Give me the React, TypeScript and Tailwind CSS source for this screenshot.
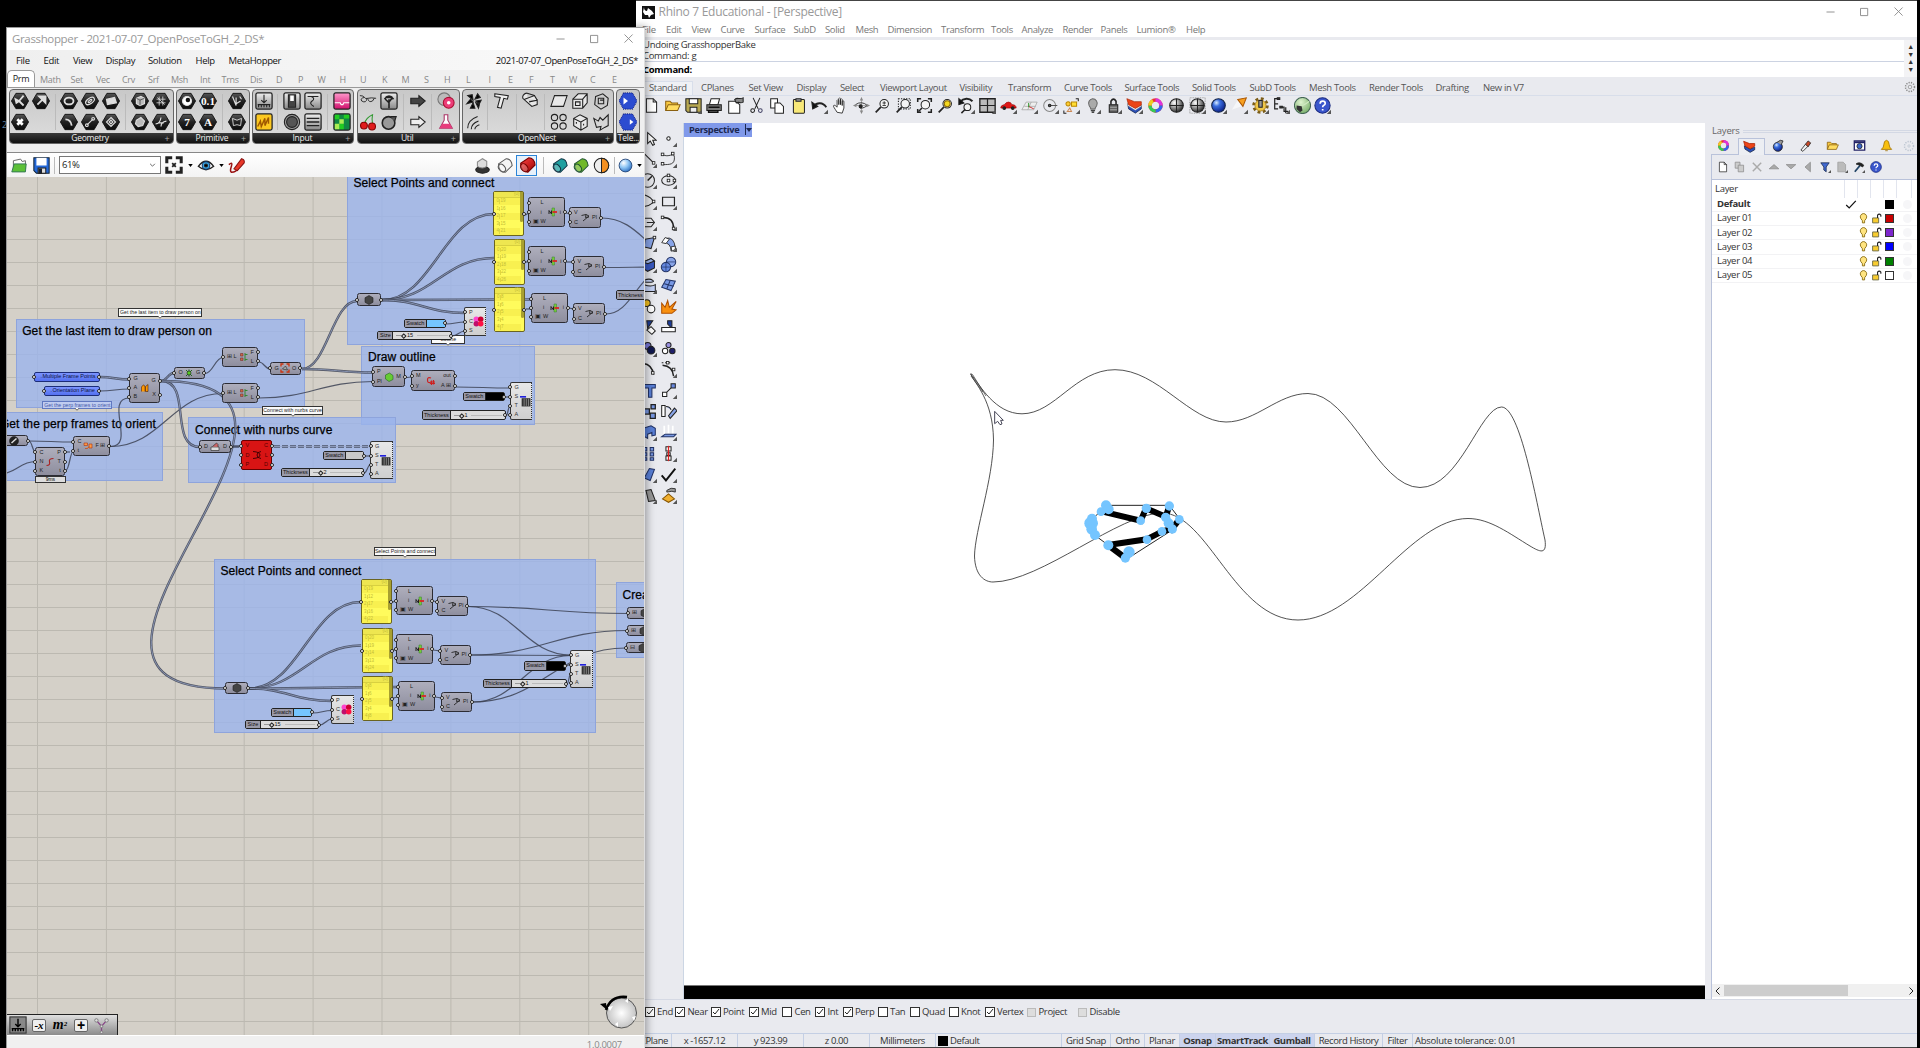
import React from "react";

type Slot = [string, string];
const UI = "font-['Open_Sans','Noto_Sans',sans-serif]";

/* ---------- shared bits ---------- */

function Slots({ items, className }: { items: Slot[]; className: string }) {
  return (
    <div className={"flex items-center whitespace-nowrap " + className}>
      {items.map(([t, w], i) => (
        <span key={i} className={"shrink-0 " + w}>{t}</span>
      ))}
    </div>
  );
}

function Ico({ children, className = "h-5 w-5" }: { children: React.ReactNode; className?: string }) {
  return (
    <svg viewBox="0 0 20 20" className={"shrink-0 " + className} fill="none" stroke="#222" strokeWidth="1.2">
      {children}
    </svg>
  );
}

const corner = <path d="M20 15v5h-5z" fill="#555" stroke="none" />;

function Defs() {
  return (
    <svg className="absolute h-0 w-0">
      <defs>
        <radialGradient id="ballBlue" cx=".35" cy=".3" r=".75"><stop offset="0" stopColor="#d8ecff" /><stop offset=".35" stopColor="#3a6ee0" /><stop offset="1" stopColor="#0a1c80" /></radialGradient>
        <radialGradient id="ballSky" cx=".35" cy=".3" r=".75"><stop offset="0" stopColor="#fff" /><stop offset=".5" stopColor="#8cc4f4" /><stop offset="1" stopColor="#2d6fc0" /></radialGradient>
        <radialGradient id="ballGrey" cx=".35" cy=".3" r=".75"><stop offset="0" stopColor="#fff" /><stop offset=".4" stopColor="#aaa" /><stop offset="1" stopColor="#222" /></radialGradient>
        <radialGradient id="ballGreen" cx=".4" cy=".3" r=".8"><stop offset="0" stopColor="#e0f4d0" /><stop offset="1" stopColor="#6fa860" /></radialGradient>
        <linearGradient id="hexDark" x1="0" y1="0" x2="0" y2="1"><stop offset="0" stopColor="#555" /><stop offset=".5" stopColor="#222" /><stop offset="1" stopColor="#0c0c0c" /></linearGradient>
        <linearGradient id="btn" x1="0" y1="0" x2="0" y2="1"><stop offset="0" stopColor="#eee" /><stop offset="1" stopColor="#888" /></linearGradient>
        <linearGradient id="pink" x1="0" y1="0" x2="0" y2="1"><stop offset="0" stopColor="#f9c" /><stop offset="1" stopColor="#d0106c" /></linearGradient>
        <linearGradient id="cyl" x1="0" y1="0" x2="1" y2="1"><stop offset="0" stopColor="#f44" /><stop offset="1" stopColor="#900" /></linearGradient>
        <radialGradient id="dial"><stop offset="0" stopColor="#fff" /><stop offset="1" stopColor="#c4c4c4" /></radialGradient>
      </defs>
    </svg>
  );
}

/* ---------- Rhino ---------- */

const rhinoMenu: Slot[] = [
  ["File", "w-[24px]"], ["Edit", "w-[25.5px]"], ["View", "w-[29px]"], ["Curve", "w-[34px]"], ["Surface", "w-[39px]"],
  ["SubD", "w-[31.5px]"], ["Solid", "w-[30.5px]"], ["Mesh", "w-[32px]"], ["Dimension", "w-[53.5px]"], ["Transform", "w-[50px]"],
  ["Tools", "w-[30.5px]"], ["Analyze", "w-[41px]"], ["Render", "w-[38px]"], ["Panels", "w-[36px]"], ["Lumion®", "w-[49.5px]"], ["Help", "w-[30px]"],
];

const rhinoTabs: Slot[] = [
  ["CPlanes", "w-[47.5px]"], ["Set View", "w-[48px]"], ["Display", "w-[43.5px]"], ["Select", "w-[40px]"],
  ["Viewport Layout", "w-[79.5px]"], ["Visibility", "w-[48.5px]"], ["Transform", "w-[56px]"], ["Curve Tools", "w-[60.5px]"], ["Surface Tools", "w-[67.5px]"],
  ["Solid Tools", "w-[57.5px]"], ["SubD Tools", "w-[59.5px]"], ["Mesh Tools", "w-[60px]"], ["Render Tools", "w-[66.5px]"], ["Drafting", "w-[47.5px]"], ["New in V7", "w-[50px]"],
];

const lens = <><circle cx="12" cy="8" r="5" fill="#f4f4f4" /><path d="M8 12l-6 6" strokeWidth="2" /></>;
const page = <path d="M4 2h8l4 4v12H4z" fill="#fff" />;

const rhinoTools: React.ReactNode[] = [
  <>{page}<path d="M12 2v4h4" /></>,
  <><path d="M2 16V5h5l2 2h7v3" fill="#f8c840" stroke="#8a6010" /><path d="M2 16l3-7h14l-3 7z" fill="#ffdc60" stroke="#8a6010" /></>,
  <><path d="M1 2h18v16H3l-2-2z" fill="#b8a850" /><path d="M5 2h10v6H5z" fill="#fff" /><path d="M6 12h8v6H6z" fill="#eee" />{corner}</>,
  <><path d="M6 2h10l-2 7H4z" fill="#fff" /><path d="M1 9h17v7H1z" fill="#777" /><path d="M3 12h13M3 16h11v2H3z" fill="#fff" stroke="#111" strokeWidth="1.6" /></>,
  <><path d="M2 5h8l5 4v10H2z" fill="#fff" /><path d="M9 3c3-3 5 0 10-2v5c-4 2-5-1-8 1z" fill="#888" /></>,
  <><path d="M6 1l6 13M14 1L8 14" /><circle cx="5.500" cy="16" r="2.200" /><circle cx="14.500" cy="16" r="2.200" stroke="#446" /></>,
  <><path d="M2 2h8v11H2z" fill="#fff" /><path d="M7 7h6l4 4v8H7z" fill="#fff" /></>,
  <><rect x="4" y="3" width="13" height="16" rx="1" fill="#f8e878" /><path d="M7 2h6v3H7z" fill="#999" /></>,
  <><path d="M3 11c4-5 11-5 15 1" strokeWidth="2.200" /><path d="M1 6l1 8 6-3z" fill="#111" />{corner}</>,
  <path d="M6 18C3 13 1 11 2 10s3 1 4 2V4q1-2 2 0v5-7q1-2 2 0v7-6q1-2 2 0v7-5q1-1 2 0v8l-2 6z" fill="#fff" strokeWidth="1" />,
  <><path d="M10 1v18M1 10h18" stroke="#999" strokeWidth="1" /><path d="M3 9q7-5 14 1-7 5-10 2" strokeWidth="1" /><path d="M10 0l2 4H8zM10 20l2-4H8zM0 10l4-2v4zM20 10l-4-2v4z" fill="#888" stroke="none" /><circle cx="9" cy="11" r="1.800" fill="#222" /></>,
  <>{lens}<path d="M10 7h4M12 5v4M10 10h4" strokeWidth="1" /></>,
  <><path d="M4 2h14v12H4z" strokeDasharray="1.5 1.500" />{lens}</>,
  <><path d="M2 6V2h4M14 2h4v4M18 14v4h-4M2 14v4h4" strokeWidth="1.800" /><circle cx="11" cy="9" r="5" fill="#f4f4f4" /><path d="M7 13l-4 4" strokeWidth="1.800" /></>,
  <>{lens}<circle cx="12" cy="8" r="3.500" fill="#f4d820" stroke="#860" /></>,
  <><path d="M2 6c5-5 11-5 15-1" strokeWidth="2.400" /><path d="M1 2v7l6-2z" fill="#111" /><circle cx="11" cy="12" r="4" fill="#f4f4f4" /><path d="M8 15l-4 4" strokeWidth="1.800" />{corner}</>,
  <><path d="M1 2h18v16H1z" fill="#bbb" strokeWidth="1.600" /><path d="M10 2v16M1 10h18" strokeWidth="1.400" />{corner}</>,
  <><path d="M1 12q0-2 4-3 2-3 5-3t4 3q5 0 5 4H1z" fill="#e01818" stroke="#900" strokeWidth=".8" /><circle cx="5" cy="13" r="1.600" fill="#222" /><circle cx="15" cy="13" r="1.600" fill="#222" />{corner}</>,
  <><path d="M1 15L6 6h13l-4 9zM4 11h13M8 15l4-9" stroke="#999" fill="#eee" strokeWidth=".8" /><path d="M9 11l6 3" stroke="#c33" /><path d="M9 12V7" stroke="#393" />{corner}</>,
  <><circle cx="9" cy="10" r="7" stroke="#888" /><path d="M9 10h9" stroke="#555" /><circle cx="9" cy="10" r="1.500" fill="#555" />{corner}</>,
  <><circle cx="6" cy="8" r="2.500" fill="#fc3" stroke="#b80" /><path d="M10 6h6v5h-6z" fill="#fd3" stroke="#b80" /><path d="M5 17l3-4 2 4z" stroke="#c85" /><path d="M15 2h3v3M1 16v3h3" />{corner}</>,
  <><path d="M10 2a5.500 5.500 0 015 8q-2 3-2 4H8q0-1-2-4a5.500 5.500 0 014-8z" fill="#aaa" stroke="#666" /><path d="M8 16h5M9 18h3" stroke="#444" strokeWidth="1.800" />{corner}</>,
  <><path d="M7 9V5q3-5 6 0v4" strokeWidth="1.800" /><path d="M5 9h10v9H5z" fill="#666" /><path d="M6 12h8M6 15h8" stroke="#aaa" />{corner}</>,
  <><path d="M2 8l9 6 7-4v4l-7 5-8-5z" fill="#2c50b8" stroke="#124" strokeWidth=".8" /><path d="M2 7l9 6 7-4v2l-7 4.500L2 10z" fill="#fff" stroke="#888" strokeWidth=".5" /><path d="M1 2l9 3.500 8 0v4l-7 4L3 9z" fill="#ec4418" stroke="#a20" strokeWidth=".8" />{corner}</>,
  <><circle cx="10" cy="10" r="6.500" stroke="#e33" strokeWidth="4" /><path d="M10 3.500a6.500 6.500 0 016.500 6.500" stroke="#d3d" strokeWidth="4" /><path d="M16.500 10a6.500 6.500 0 01-6.500 6.500" stroke="#36e" strokeWidth="4" /><path d="M10 16.500A6.500 6.500 0 013.500 10" stroke="#3c5" strokeWidth="4" /><path d="M3.500 10A6.500 6.500 0 017 4.300" stroke="#ec2" strokeWidth="4" /></>,
  <><circle cx="10" cy="10" r="8" fill="url(#ballGrey)" /><path d="M10 2v16M2 10h16" stroke="#222" /></>,
  <><path d="M1 1h18v18H1z" stroke="#999" strokeDasharray="1 1" /><circle cx="10" cy="10" r="8" fill="url(#ballGrey)" /><path d="M10 2v16M2 10h16" />{corner}</>,
  <><circle cx="10" cy="10" r="8" fill="url(#ballBlue)" stroke="#124" />{corner}</>,
  <><path d="M1 15L9 2l6 8z" fill="#fff" stroke="none" opacity=".6" /><path d="M8 3l10-2-4 10z" fill="#f8a020" stroke="#a50" />{corner}</>,
  <><circle cx="10" cy="10" r="8" stroke="#7a5c18" strokeWidth="3.400" strokeDasharray="3.300 3" /><circle cx="10" cy="10" r="6.500" fill="#f0c848" stroke="#a88020" strokeWidth="1" /><path d="M8 4h4v8H8z" fill="#999" />{corner}</>,
  <><path d="M6 2H2v12h4M2 8h4M9 12h4v5h5M15 12v7" strokeWidth="1.400" /><path d="M5 1h3v2H5zM8 11h3v2H8z" fill="#333" />{corner}</>,
  <><circle cx="10" cy="10" r="9.500" fill="url(#ballGreen)" stroke="#465" /><path d="M3 11q8 0 15-6" stroke="#cfe8c0" /><path d="M3 10l6 1 1 5-3 2-4-4z" fill="#333" stroke="none" /></>,
  <><circle cx="10" cy="10" r="9" fill="#3a56cc" stroke="#1c2c80" /><path d="M7.200 7.800q0-3 3-3t3 2.700q0 1.500-2 2.500-1 .6-1 2M10.200 14v2" stroke="#fff" strokeWidth="2" />{corner}</>,
];

const sq = (x: number, y: number) => <rect x={x - 1.500} y={y - 1.500} width="3" height="3" fill="#fff" strokeWidth="1" />;
const sideTools: [React.ReactNode, React.ReactNode][] = [
  [<path d="M9 3v13l3-3 3 5 2-1-2-5h4z" fill="#fff" />, <><circle cx="10" cy="10" r="2" fill="#fff" />{corner}</>],
  [<><path d="M5 3l11 11" />{sq(16, 14)}{corner}</>, <><path d="M3 4c7 5 14-4 14 4s-5 8-14 8" strokeWidth="1" />{sq(3, 4)}{sq(15, 3)}{sq(3, 15)}{corner}</>],
  [<><circle cx="9" cy="10" r="8" /><path d="M9 10l5-5" strokeWidth="1.800" />{corner}</>, <><ellipse cx="10" cy="10" rx="8" ry="5.500" />{sq(10, 4)}{sq(10, 10)}{sq(17, 10)}{corner}</>],
  [<><path d="M5 2q9 3 11 9-5 4-11 5" />{sq(16, 10)}{corner}</>, <><path d="M3 5h14v10H3z" strokeWidth="1.400" />{corner}</>],
  [<><path d="M5 5h8l4 5-4 5H5M8 10h8" />{corner}</>, <><path d="M4 4q12 0 12 13" strokeWidth="1.800" />{sq(3, 4)}{sq(16, 17)}{corner}</>],
  [<><path d="M6 5l11-2-4 13-8-2z" fill="#88a4e8" />{sq(17, 3)}{corner}</>, <><path d="M6 4q11-3 12 12l-5 3Q13 9 4 9z" fill="#88a4e8" strokeWidth="1" /><path d="M6 3l5 2-4 5-5-1z" fill="#fff" strokeWidth="1" /><path d="M13 14l5-1v4l-4 2z" fill="#fff" strokeWidth="1" />{corner}</>],
  [<><path d="M4 7l9-4 4 3v8l-8 4-5-3z" fill="#3858c0" /><path d="M4 7l9-4 4 3-8 3z" fill="#a0b8f0" />{corner}</>, <><circle cx="13" cy="7" r="5.500" fill="#88a4e8" stroke="#236" /><circle cx="7" cy="13" r="5.500" fill="#6488e0" stroke="#236" /><path d="M2 13h10M7 8v10M8 7h10" stroke="#236" strokeWidth=".8" />{corner}</>],
  [<><path d="M5 4q6-3 10 0t-10 2M5 9q8 3 13 0v8H5z" fill="#c4d2f6" />{corner}</>, <><path d="M2 12L7 3l11 2-5 11z" fill="#7898e4" stroke="#236" /><path d="M5 8l11 3M12 4L8 14" stroke="#236" />{corner}</>],
  [<><circle cx="8" cy="6" r="4" fill="#f4c020" /><circle cx="13" cy="13" r="4.500" fill="#fff" /></>, <path d="M2 18L2 6l4 5 3-8 2 8 8-7-5 9 5 1-5 4z" fill="#f89010" stroke="#b05000" />],
  [<><path d="M8 2h7L9 11z" fill="#1c3c98" /><path d="M8 13l5-4 5 5-4 4z" fill="#fff" /></>, <><path d="M2 10h16v5H2z" fill="#fff" /><path d="M9 2h5v8h-1l-4-4z" fill="#1c3c98" /></>],
  [<><circle cx="9" cy="7" r="4" fill="#7878d8" /><circle cx="13" cy="12" r="4.500" fill="#101850" />{corner}</>, <><circle cx="10" cy="6" r="3" fill="#9890e0" /><circle cx="6" cy="13" r="3.200" fill="#fff" /><circle cx="14.500" cy="13" r="3.200" fill="#20206c" /></>],
  [<><path d="M4 3q10 1 12 13" strokeWidth="1.800" />{sq(15, 14)}</>, <><path d="M3 5q12 1 13 13" strokeWidth="1.800" /><path d="M2 2h12" strokeDasharray="2 2" />{sq(9, 2)}{sq(16, 10)}{corner}</>],
  [<path d="M4 3h14v4h-4v11h-4V7H4z" fill="#5a80d8" stroke="#236" />, <><path d="M13 2h5v5h-5z" fill="#6888e0" /><path d="M3 12h5v5H3zM8 12l5-5" fill="#fff" />{corner}</>],
  [<><path d="M13 2h5v5h-5zM5 7h6v6H5zM12 12h6v6h-6z" fill="#7898e4" strokeWidth="1.500" /></>, <><path d="M2 3h4v13H2z" fill="#fff" /><path d="M7 4q5 0 6 4M10 15l7-9 3 3-8 9z" fill="#88a4e8" /></>],
  [<><path d="M4 5l9-3 5 3v8l-4 1v-4l-5 2v5l-5-3z" fill="#5a80d8" stroke="#236" />{corner}</>, <><path d="M5 2v10M10 1v10M15 2v10" stroke="#fff" strokeWidth="2" /><path d="M2 15l4-3h13l-3 3z" fill="#7898e4" stroke="#236" />{corner}</>],
  [<><path d="M4 3h4v4H4zM12 3h4v4h-4zM4 9h4v4H4zM12 9h4v4h-4zM4 15h4v3H4zM12 15h4v3h-4z" fill="#7898e4" stroke="#236" /></>, <><path d="M7 2h6v5H7zM8 9h4v3H8zM7 13h6v5H7z" fill="#fff" /><path d="M10 1v18" stroke="#e02020" strokeWidth="1.500" />{corner}</>],
  [<><path d="M5 14L11 3l6 1-5 13z" fill="#5a80d8" stroke="#236" />{corner}</>, <><path d="M2 11l5 6L18 3" stroke="#111" strokeWidth="2.200" />{corner}</>],
  [<><path d="M7 4l6-1 5 13-8 1z" fill="#999" />{corner}</>, <><path d="M3 14l7-6 7 6-7 4z" fill="#f0b030" stroke="#850" /><path d="M8 4q5-4 10-2v4l-4-1-6 1z" fill="#999" strokeWidth="1" />{corner}</>],
];

const osnaps: [string, boolean, string][] = [
  ["End", true, "w-[30.500px]"], ["Near", true, "w-[35.500px]"], ["Point", true, "w-[38px]"], ["Mid", true, "w-[33.500px]"], ["Cen", false, "w-[33px]"],
  ["Int", true, "w-[27.500px]"], ["Perp", true, "w-[35px]"], ["Tan", false, "w-[32px]"], ["Quad", false, "w-[39px]"], ["Knot", false, "w-[36px]"], ["Vertex", true, "w-[42px]"],
];

function Osnap() {
  return (
    <div className="flex h-[34px] shrink-0 items-center border-t border-[#d5d9e4] pb-[9px] pl-[8.500px] text-[9.500px] tracking-[-0.35px] text-[#333]">
      {osnaps.map(([t, on, w]) => (
        <div key={t} className={"flex shrink-0 items-center gap-[2.500px] " + w}>
          <span className="flex h-[10px] w-[10px] items-center justify-center border border-[#333] bg-white">
            {on && <svg viewBox="0 0 8 8" className="h-2 w-2"><path d="M1 4l2 2 4-5" fill="none" stroke="#222" /></svg>}
          </span>
          {t}
        </div>
      ))}
      {["Project", "Disable"].map((t) => (
        <div key={t} className="flex w-[51px] shrink-0 items-center gap-[3px]">
          <span className="h-[9px] w-[9px] border border-[#bbb] bg-[#ddd]" />
          {t}
        </div>
      ))}
    </div>
  );
}

const statusCells: [string, string][] = [
  ["CPlane", "w-[36px] justify-end pr-[3px]"], ["x -1657.12", "w-[66px] justify-center"], ["y 923.99", "w-[66px] justify-center"], ["z 0.00", "w-[66px] justify-center"],
  ["Millimeters", "w-[66px] justify-center"], ["■", "w-[126px] pl-[2px]"], ["Grid Snap", "w-[49px] justify-center"], ["Ortho", "w-[34px] justify-center"],
  ["Planar", "w-[35px] justify-center"], ["Osnap", "w-[36px] justify-center bg-[#ccd4ee] font-bold"], ["SmartTrack", "w-[54px] justify-center bg-[#ccd4ee] font-bold"],
  ["Gumball", "w-[45px] justify-center bg-[#ccd4ee] font-bold"], ["Record History", "w-[68px] justify-center"], ["Filter", "w-[30px] justify-center"],
];

function Viewport() {
  return (
    <div className="relative flex min-w-0 flex-1 flex-col bg-white">
      <div className="flex h-[13.500px] w-[68px] items-center bg-[#8099ea] pl-[5px] text-[9.250px] font-bold tracking-[-0.3px] text-[#1c2850]">
        <span className="flex-1">Perspective</span>
        <span className="flex h-[11px] w-[7.500px] items-center justify-center border-l border-[#1c2850]">
          <svg viewBox="0 0 6 4" className="h-1 w-1.5"><path d="M0 0h6L3 4z" fill="#1c2850" /></svg>
        </span>
      </div>
      <svg viewBox="684 123 1021 861" className="absolute left-0 top-0 h-[861px] w-[1021px]" fill="none">
        <path
          d="M970.7 374C980 385 995 413.800 1022 413.800C1055 413.800 1075 369.700 1115 369.700C1158 369.700 1190 422 1226 422C1256 422 1278 393.500 1308 393.500C1350 393.500 1378 487.500 1420 487.500C1460 487.500 1480 407 1501.500 407C1520 407 1536 500 1545 540C1547 555 1540 552 1530 546C1510 534 1490 518.500 1468 518.500C1410 518.500 1360 620 1298 620C1235 620 1208 513 1162 513C1120 513 1040 582 993 582C985 582 975 576 974.500 556C975 530 993 480 993.500 440C993 400 975 384 970.700 374Z"
          stroke="#333" strokeWidth=".85"
        />
        <path d="M970.500 373.500L972.500 374.500L986 396M971 376L983 392" stroke="#333" strokeWidth=".7" />
        <g transform="translate(930 350) scale(.33333)">
          <path d="M528 466H718L750 508M534 585L480 545M586 630L727 540M528 466L495 500" stroke="#222" strokeWidth="3" />
          <path d="M515 484L632 512L648 475L707 500L718 468M707 500L727 535L748 508M534 585L650 568L695 545L727 535M534 585L586 624" stroke="#000" strokeWidth="18" />
          <g fill="#75c5ff">
            {[[528, 466, 15], [536, 478, 15], [513, 485, 13], [482, 520, 19], [486, 506, 15], [487, 520, 17], [485, 538, 16], [495, 555, 15], [632, 512, 13], [649, 475, 14], [718, 468, 14], [707, 502, 14], [716, 520, 15], [727, 537, 14], [748, 508, 13], [696, 544, 13], [651, 569, 13], [535, 586, 15], [597, 606, 17], [586, 624, 14]].map(([x, y, r], i) => (
              <circle key={i} cx={x} cy={y} r={r} />
            ))}
          </g>
          <path d="M194 184v37l9-7 7 10 6-2-4-11h8z" fill="#fff" stroke="#445" strokeWidth="3" />
        </g>
      </svg>
    </div>
  );
}

const layers: [string, string][] = [
  ["Layer 01", "bg-[#c80000]"], ["Layer 02", "bg-[#7d26cd]"], ["Layer 03", "bg-[#0000ff]"], ["Layer 04", "bg-[#008000]"], ["Layer 05", "bg-white"],
];

const panelTabs: React.ReactNode[] = [
  rhinoTools[24],
  <><path d="M2 9l9 5 7-3v4l-7 4-8-5z" fill="#2c50b8" stroke="#124" /><path d="M1 2l9 3.500 8 0v4l-7 4L3 9z" fill="#ec4418" stroke="#a20" /></>,
  <><circle cx="9" cy="12" r="7" fill="url(#ballBlue)" /><path d="M8 5q5-5 9-2l-3 6" fill="#999" /></>,
  <><path d="M3 17l7-9 4 3-8 8z" fill="#eee" /><path d="M10 8l4-5 4 3-4 6z" fill="#c84828" /></>,
  rhinoTools[1],
  <><path d="M2 3h16v14H2z" fill="#fff" stroke="#226" strokeWidth="2" /><path d="M2 5h16" stroke="#226" strokeWidth="3" /><circle cx="10" cy="11" r="4" fill="#3a66cc" /></>,
  <path d="M2 16q4-3 4-8t4-6q4 1 4 6t4 8zM8 18h4" fill="#f8c010" stroke="#a07000" />,
];

const layerTools: React.ReactNode[] = [
  <>{page}<path d="M12 2v4h4" /></>,
  <g stroke="#888"><path d="M2 2h8v10H2z" fill="#ccc" /><path d="M7 7h9v11H7z" fill="#ccc" /></g>,
  <path d="M3 3l14 14M17 3L3 17" stroke="#aaa" strokeWidth="2.400" />,
  <path d="M2 13l8-7 8 7z" fill="#aaa" stroke="#888" />,
  <path d="M2 6l8 7 8-7z" fill="#aaa" stroke="#888" />,
  <path d="M14 2v16L5 10z" fill="#aaa" stroke="#888" />,
  <><path d="M3 3h14l-5 7v8l-4-3v-5z" fill="#4068d0" stroke="#124" />{corner}</>,
  <><path d="M3 2h9l4 4v12H3z" fill="#bbb" stroke="#999" />{corner}</>,
  <><path d="M3 18L12 7" strokeWidth="3" stroke="#246" /><path d="M5 5q6-5 13 2l-2 3-5-3z" fill="#222" />{corner}</>,
  <><circle cx="10" cy="10" r="9" fill="#3a56cc" stroke="#1c2c80" /><path d="M7 7.800q0-3 3-3t3 2.700q0 1.500-2 2.500-1 .6-1 2M10 14v2" stroke="#fff" strokeWidth="2" /></>,
];

function LayersPanel() {
  return (
    <aside className="ml-[6px] flex w-[206px] shrink-0 flex-col">
      <div className="mt-[3px] flex h-[11px] items-center gap-[3px] pl-px text-[9.500px] tracking-[-0.2px] text-[#666]">
        Layers<span className="h-[3px] flex-1 border-y border-[#d3d8e4]" />
      </div>
      <div className="flex h-[18px] items-end">
        {panelTabs.map((g, i) => (
          <div
            key={i}
            className={
              "flex h-[17.500px] w-[27px] shrink-0 items-center justify-center " +
              (i === 0 ? "pr-[3px] " : "") +
              (i === 1 ? "border border-b-0 border-[#b9c2da] bg-[#eceef3] pr-[4px]" : "border-b border-[#b9c2da]")
            }
          >
            <Ico className="h-[13px] w-[13px]">{g}</Ico>
          </div>
        ))}
        <div className="flex h-[17.500px] flex-1 items-center justify-center border-b border-[#b9c2da]">
          <Ico className="h-3 w-3"><circle cx="10" cy="10" r="7.500" stroke="#bbc4d0" strokeWidth="2.500" strokeDasharray="2 2" /><circle cx="10" cy="10" r="2" stroke="#bbc4d0" /></Ico>
        </div>
      </div>
      <div className="flex h-[25px] shrink-0 items-center gap-[5px] border-b border-l border-[#b9c2da] pl-[5px]">
        {layerTools.map((g, i) => <Ico key={i} className="h-3 w-3">{g}</Ico>)}
      </div>
      <div className="flex min-h-0 flex-1 flex-col border-l border-[#b9c2da] bg-white text-[9.500px] tracking-[-0.3px] text-[#333]">
        <div className="flex h-[18px] shrink-0 items-center pl-[3px]">
          <span className="w-[129px]">Layer</span>
          {[0, 1, 2, 3, 4].map((i) => <span key={i} className="h-full w-[13px] border-l border-[#e2e5ee]" />)}
          <span className="h-full w-[3px] border-r border-[#e2e5ee]" />
        </div>
        <div className="flex h-[14px] shrink-0 items-center border-b border-[#f2f2f4] pl-[5px] font-bold">
          <span className="w-[128px]">Default</span>
          <span className="w-[12px]"><Ico className="h-[12px] w-[12px]"><path d="M2 10l5 5L18 3" stroke="#111" strokeWidth="2" /></Ico></span>
          <span className="w-[28px]" />
          <span className="h-[9px] w-[9px] border border-black bg-black" />
          <span className="ml-[9px] h-[9px] w-[9px] rounded-full bg-[#f6f6f8]" />
        </div>
        {layers.map(([n, c]) => (
          <div key={n} className="flex h-[14.200px] shrink-0 items-center border-b border-[#f2f2f4] pl-[5px]">
            <span className="w-[141px]">{n}</span>
            <Ico className="h-[11px] w-[11px]"><path d="M10 1a6 6 0 015 9l-3 4v4H8v-4l-3-4a6 6 0 015-9z" fill="#ffe480" stroke="#866a10" strokeWidth="1.600" /></Ico>
            <Ico className="ml-[2px] h-[11px] w-[12px]"><path d="M2 9h11v9H2z" fill="#f8cc30" stroke="#664" strokeWidth="1.600" /><path d="M11 9V4q3-4 6 0v3" strokeWidth="2" /></Ico>
            <span className={"ml-[2px] h-[9px] w-[9px] border border-[#333] " + c} />
            <span className="ml-[9px] h-[9px] w-[9px] rounded-full bg-[#f6f6f8]" />
          </div>
        ))}
        <div className="flex-1" />
        <div className="flex h-[13px] shrink-0 items-center bg-[#f0f0f0] text-[#555]">
          <Ico className="mx-px h-[10px] w-[10px]"><path d="M13 3l-7 7 7 7" strokeWidth="2" /></Ico>
          <span className="h-[11px] w-[124px] bg-[#cdcdcd]" />
          <span className="flex-1" />
          <Ico className="mx-px h-[10px] w-[10px]"><path d="M7 3l7 7-7 7" strokeWidth="2" /></Ico>
        </div>
        <div className="h-[2px] shrink-0" />
      </div>
    </aside>
  );
}

function WinButtons({ className }: { className: string }) {
  return (
    <div className={"flex items-center " + className}>
      {["M5 10h9", "M5 6h8v8H5z", "M5 5l9 9M14 5l-9 9"].map((d) => (
        <span key={d} className="flex w-[34px] justify-center"><Ico className="h-[18px] w-[18px]"><path d={d} stroke="#888" strokeWidth="1" /></Ico></span>
      ))}
    </div>
  );
}

function RhinoWindow() {
  return (
    <div className={"absolute left-[636px] top-0 flex h-[1048px] w-[1281px] flex-col overflow-hidden border-t border-[#444] bg-[#e9eaef] " + UI}>
      <div className="flex h-[22px] shrink-0 items-center bg-white pl-[6px] text-[12px] tracking-[-0.28px] text-[#999]">
        <svg viewBox="0 0 13 13" className="mr-[3.500px] h-[13px] w-[13px]"><rect width="13" height="13" fill="#111" /><path d="M2 1q0 4 3 4l1-3 4 3 2 3-3 1-2 3-1-3-3 0-2-3z" fill="#fff" /></svg>
        <span className="flex-1">Rhino 7 Educational - [Perspective]</span>
        <WinButtons className="mr-px" />
      </div>
      <Slots items={rhinoMenu} className="h-[14px] shrink-0 bg-white pl-[6px] pt-px text-[9.500px] tracking-[-0.35px] text-[#777]" />
      <div className="mt-[3px] flex h-[37px] shrink-0 bg-white text-[9.500px] leading-[11px] tracking-[-0.3px] text-[#333]">
        <div className="flex flex-1 flex-col">
          <div className="h-[21.500px] border-b border-[#ccd3e2] pl-[7px] leading-[10.500px]">
            <div>Undoing GrasshopperBake</div>
            <div>Command: g</div>
          </div>
          <div className="pl-[7px] pt-[2px] font-bold text-black">Command:</div>
        </div>
        <div className="flex w-[13px] flex-col items-center justify-between bg-[#f3f3f5] py-1 text-[7px] leading-[6px]"><span>▲</span><span>▼</span><span>▲</span><span>▼</span></div>
      </div>
      <div className="mt-[2px] flex h-[17px] shrink-0 items-center border-b border-[#d8deea] text-[9.500px] tracking-[-0.35px] text-[#555]">
        <span className="flex h-[14px] w-[57px] items-center self-end border-r border-t border-[#d8deea] bg-[#eff1f5] pl-[13px]">Standard</span>
        <Slots items={rhinoTabs} className="flex-1 pl-[8px] pt-[3px]" />
        <Ico className="mr-[1px] h-3 w-3"><circle cx="10" cy="10" r="7.500" stroke="#888" strokeWidth="2.500" strokeDasharray="2 2" /><circle cx="10" cy="10" r="3" stroke="#888" /></Ico>
      </div>
      <div className="flex h-[27px] shrink-0 items-start pl-[5.500px] pt-[1px]">
        {rhinoTools.map((g, i) => (
          <span key={i} className="flex w-[20.970px] shrink-0 justify-center"><Ico className="h-[17px] w-[17px]">{g}</Ico></span>
        ))}
      </div>
      <div className="flex min-h-0 flex-1">
        <div className="flex w-[48px] shrink-0 flex-col border-r border-[#ccd6e4] pt-[5px]">
          {sideTools.map(([a, b], i) => (
            <div key={i} className="flex h-[21px] shrink-0 items-center gap-[3px] pl-[4px]">
              <Ico className="h-[17px] w-[17px]">{a}</Ico>
              <Ico className="h-[17px] w-[17px]">{b}</Ico>
            </div>
          ))}
        </div>
        <div className="flex min-w-0 flex-1 flex-col">
          <Viewport />
          <div className="h-[14px] shrink-0 border-t border-[#777] bg-black" />
        </div>
        <LayersPanel />
      </div>
      <Osnap />
      <div className="flex h-[15px] shrink-0 items-stretch border-b border-t border-b-[#444] border-t-[#c4cfe4] text-[9.500px] tracking-[-0.4px] text-[#333]">
        {statusCells.map(([t, c]) => (
          <div key={t} className={"flex shrink-0 items-center whitespace-nowrap border-r border-[#c4cfe4] leading-none " + c}>
            {t === "■" ? <><span className="mr-[2px] h-[10px] w-[10px] bg-black" />Default</> : t}
          </div>
        ))}
        <span className="whitespace-nowrap pl-[2px] leading-[13px] tracking-[-0.25px]">Absolute tolerance: 0.01</span>
      </div>
    </div>
  );
}

/* ---------- Grasshopper ribbon ---------- */

const hex = (g: React.ReactNode) => (
  <><path d="M5.500 1.500h9L19.500 10l-5 8.500h-9L.5 10z" fill="url(#hexDark)" stroke="#111" strokeWidth="1" /><g stroke="#ddd" strokeWidth="1.300">{g}</g></>
);
const box = (g: React.ReactNode, fill = "url(#btn)") => (
  <><rect x="1" y="1" width="18" height="18" rx="2" fill={fill} stroke="#222" strokeWidth="1.400" />{g}</>
);
const glyph = (t: string) => (
  <text x="10" y="14.500" textAnchor="middle" fontSize="12.500" fontWeight="bold" fontFamily="Liberation Serif, serif" fill="#fff" stroke="none">{t}</text>
);

type Col = [React.ReactNode, React.ReactNode | null];
type Panel = { name: string; w: string; groups: Col[][]; more?: boolean };

const ribbon: Panel[] = [
  {
    name: "Geometry", w: "w-[165px]", more: true, groups: [
      [[hex(<path d="M9 10L5 8l1 4zM9 10l5-6M9 10l5 5" strokeWidth="2" fill="#aaa" />), hex(<path d="M7 7l6 6M13 7l-6 6" strokeWidth="3" stroke="#fff" />)], [hex(<path d="M6 14l7-7M8 5h7v7z" strokeWidth="2" fill="#ddd" />), null]],
      [[hex(<ellipse cx="10" cy="10" rx="5" ry="3.800" strokeWidth="2" />), hex(<path d="M6 7q6 0 7 7" strokeWidth="2" />)], [hex(<><ellipse cx="10" cy="10" rx="5.500" ry="3" transform="rotate(-35 10 10)" /><ellipse cx="10" cy="10" rx="2.500" ry="1" transform="rotate(-35 10 10)" /></>), hex(<><path d="M7 13l6-6" /><circle cx="6.500" cy="13.500" r="1.500" /><circle cx="13.500" cy="6.500" r="1.500" /></>)], [hex(<path d="M5 8l9-2 2 6-10 2z" fill="#ddd" />), hex(<path d="M10 5l5 5-5 5-5-5zM10 8l2 2-2 2-2-2z" />)]],
      [[hex(<><path d="M6 7l5-2 4 2v6l-5 2-4-2z" fill="#bbb" /><path d="M6 7l4 2 5-2M10 9v6" stroke="#333" strokeWidth=".8" /></>), hex(<path d="M6 8l5-3 4 4-2 5-5 1-3-3z" fill="#bbb" />)], [hex(<path d="M5 8h10M5 12h10M8 5v10M12 5v10M6 6l8 8" strokeWidth=".9" />), hex(<path d="M4 12q5 0 6-7M10 15q0-5 6-6M7 11l6 0" />)]],
    ],
  },
  {
    name: "Primitive", w: "w-[74px]", more: true, groups: [
      [[hex(<><circle cx="10" cy="10" r="5" fill="#fff" /><circle cx="11" cy="9" r="2.500" fill="#111" stroke="none" /></>), hex(glyph("7"))], [hex(glyph("0.1")), hex(glyph("A"))]],
      [[hex(<path d="M5 5l4 10M9 15V6M9 13l5-3M13 5l2 3" />), hex(<path d="M5 6l5 2 5-2-1 8-4-1-4 1z" strokeWidth="1" />)]],
    ],
  },
  {
    name: "Input", w: "w-[102px]", more: true, groups: [
      [[box(<path d="M10 3v9M7 9l3 3 3-3M3 14h14M4 14v3M7 14v3M10 14v3M13 14v3M16 14v3" />), box(<path d="M3 15l3-6 1 6 4-9 0 8 4-9v7" stroke="#a05800" strokeWidth="1.600" />, "#fcc820")]],
      [[box(<><path d="M6 3h8v14H6z" fill="#444" /><path d="M8 4h4v6H8z" fill="#fff" stroke="none" /></>), <><circle cx="10" cy="10" r="8.500" fill="#999" /><circle cx="10" cy="10" r="6" fill="#555" /></>], [box(<path d="M4 5h12M8 5q5 2 1 5t2 6" />), box(<path d="M3 6h14M3 10h14M3 14h14" strokeWidth="1.600" />)]],
      [[box(<path d="M2 12h6l1 2h2l1-2h6" stroke="#fff" />, "url(#pink)"), box(<><path d="M2 2h5v5H2zM12 2h6v4h-6zM7 12h5v6H7z" fill="#2c2" stroke="none" /><path d="M7 7h5v5H7zM2 12h5v6H2z" fill="#ae5" stroke="none" /></>, "#184")]],
    ],
  },
  {
    name: "Util", w: "w-[103px]", more: true, groups: [
      [[<path d="M1 4q4 0 5 2t4 1 9 0M6 6q-5 1-3 4 5 3 6-3M10 8q1 4 5 2l2-3" strokeWidth="1" />, <><path d="M6 12Q8 5 15 2q-1 5 0 10" stroke="#393" /><circle cx="5.500" cy="14" r="3.800" fill="#e01c1c" stroke="#800" /><circle cx="14.500" cy="15" r="3.800" fill="#e01c1c" stroke="#800" /></>], [box(<path d="M10 18V8M10 12l-4-4M10 11l4-5M5 8q5-7 10 0M6 6h8" strokeWidth="1.800" />), <><circle cx="9.500" cy="11" r="7" fill="#999" strokeWidth="1.800" /><path d="M12 4h6l-2 6" fill="#555" /></>]],
      [[<path d="M2 7h9V4l7 6-7 6v-3H2z" fill="#444" />, <path d="M2 7h9V4l7 6-7 6v-3H2z" fill="#eee" />]],
      [[<><circle cx="8" cy="8" r="7" fill="#bbb" stroke="#777" /><circle cx="13" cy="12" r="6" fill="#ec3c78" stroke="#a13" /><circle cx="13" cy="12" r="2" fill="#fff" stroke="none" /></>, <><path d="M8 2h4v6l5 9H3l5-9z" fill="#fff" stroke="#a36" /><path d="M6 12h8l3 5H3z" fill="#e83c7c" stroke="none" /></>]],
    ],
  },
  {
    name: "OpenNest", w: "w-[152px]", more: true, groups: [
      [[<path d="M9 9L3 4l5-1zM11 8l3-6 3 4zM9 11l-7 2 4-5zM12 10l6-1-2 4zM9 12l-3 6h5zM12 12l3 6 1-4z" fill="#000" />, <path d="M3 17Q3 8 14 4M7 18q0-6 8-9M11 18q0-3 5-5" />]],
      [[<path d="M2 2l15 2-1 4-4-1-3 11-4-1 3-11-6-1z" fill="#eee" />, null]],
      [[<path d="M6 1q-5 2-4 6l10 9 6-2 0-5-9 2M4 8l11-4 3 5M6 1l9 3" fill="#e8e8e8" />, null]],
      [[<path d="M5 4h14l-4 12H1z" fill="#e8e8e8" />, <><circle cx="5" cy="5" r="3.500" /><circle cx="14.500" cy="5" r="3.500" /><circle cx="5" cy="14.500" r="3.500" /><circle cx="14.500" cy="14.500" r="3.500" /></>], [<path d="M2 8l6-6h10v10l-5 6H2zM2 8h11v10M13 8l5-6M5 11h5v4H5z" fill="#e8e8e8" />, <path d="M3 6l7-4 8 4v9l-7 4-8-5zM3 6l8 4v9M11 10l7-4M6 10v2M14 12v2" fill="#e8e8e8" />], [<path d="M4 5l8-3 6 5-1 8-7 4-7-5zM7 7h6v6H7zM9 9h4" />, <path d="M2 6l5 3 2-4 3 3 6-6v12l-4 2-5 3 1-4-5 1z" />]],
    ],
  },
  {
    name: "Tele...", w: "w-[24px]", groups: [
      [[<><path d="M5 1h10l5 9-5 9H5L0 10z" fill="#2c4cd0" stroke="#128" strokeDasharray="1 1" /><path d="M5 6l5 4-5 4z" fill="#fff" stroke="none" /></>, <><path d="M5 1h10l5 9-5 9H5L0 10z" fill="#2c4cd0" stroke="#128" strokeDasharray="1 1" /><path d="M12 7l4 3-4 3z" fill="#fff" stroke="none" /></>]],
    ],
  },
];

function Ribbon() {
  return (
    <div className="flex h-[66px] shrink-0 items-start gap-[2.400px] border-b border-t border-b-[#888] border-t-[#999] bg-[#efefef] pl-[1.500px] pt-[1px]">
      {ribbon.map((p) => (
        <div key={p.name} className={"flex h-[55px] shrink-0 flex-col overflow-hidden rounded-[4px] border border-[#666] bg-gradient-to-b from-[#c8c8c8] to-[#dedede] " + p.w}>
          <div className="flex flex-1 items-center">
            {p.groups.map((g, gi) => (
              <React.Fragment key={gi}>
                {gi > 0 && <span className="mx-[3.200px] h-9 w-px bg-[#bbb]" />}
                {g.map((c, ci) => (
                  <div key={ci} className="flex w-[21px] flex-col items-center gap-[3px]">
                    <Ico className="h-[18px] w-[18px]">{c[0]}</Ico>
                    <Ico className="h-[18px] w-[18px]">{c[1]}</Ico>
                  </div>
                ))}
              </React.Fragment>
            ))}
          </div>
          <div className="flex h-[10px] shrink-0 items-center bg-gradient-to-b from-[#3a3a3a] to-[#111] text-[8.500px] leading-none tracking-[-0.25px] text-[#eee]">
            <span className={"flex-1 text-center " + (p.more ? "pl-[6px]" : "")}>{p.name}</span>
            {p.more && <span className="w-[8px] text-[9px] text-[#aaa]">+</span>}
          </div>
        </div>
      ))}
    </div>
  );
}

const ghMenu: Slot[] = [["File", "w-[27.500px]"], ["Edit", "w-[29.500px]"], ["View", "w-[32.500px]"], ["Display", "w-[42.500px]"], ["Solution", "w-[47.500px]"], ["Help", "w-[33px]"], ["MetaHopper", "w-[60px]"]];
const ghTabs: Slot[] = [
  ["Math", "w-[30.500px]"], ["Set", "w-[25.500px]"], ["Vec", "w-[26px]"], ["Crv", "w-[26px]"], ["Srf", "w-[23px]"], ["Msh", "w-[29px]"], ["Int", "w-[21.500px]"], ["Trns", "w-[28.500px]"], ["Dis", "w-[26px]"],
  ["D", "w-[22px]"], ["P", "w-[19.500px]"], ["W", "w-[22px]"], ["H", "w-[20.500px]"], ["U", "w-[22px]"], ["K", "w-[19.500px]"], ["M", "w-[22.500px]"], ["S", "w-[20px]"], ["H", "w-[22px]"], ["L", "w-[22.500px]"], ["I", "w-[19.500px]"],
  ["E", "w-[21px]"], ["F", "w-[21px]"], ["T", "w-[19px]"], ["W", "w-[21px]"], ["C", "w-[22px]"], ["E", "w-[20px]"],
];

const cylinder = (fill: string, line: string) => <><path d="M3 8l9-6q6 0 7 8l-8 8q-8 0-8-10z" fill={fill} stroke={line} /><ellipse cx="7" cy="13" rx="3.500" ry="5" transform="rotate(-40 7 13)" fill="#fff" fillOpacity=".25" stroke={line} /></>;
const Caret = () => <svg viewBox="0 0 6 4" className="h-[3px] w-[5px]"><path d="M0 0h6L3 4z" /></svg>;

function CanvasToolbar() {
  return (
    <div className="flex h-[24px] shrink-0 items-center bg-gradient-to-b from-white to-[#f3f3f3] pl-[4px]">
      <Ico className="h-[17px] w-[16px]"><path d="M3 17V4l9-2 2 3 4-1v10z" fill="#fff" stroke="#666" /><path d="M1 18L4 8h15l-1 10z" fill="#5cc038" stroke="#375" /></Ico>
      <Ico className="ml-[6px] h-[17px] w-[17px]"><path d="M1 1h18v18H4l-3-3z" fill="#2468d8" stroke="#123" /><path d="M4 1h12v9H4z" fill="#fff" stroke="none" /><path d="M6 13h9v6H6z" fill="#ddd" /><path d="M7 14h3v5H7z" fill="#124" /></Ico>
      <span className="mx-[4px] h-[17px] w-px bg-[#bbb]" />
      <div className="flex h-[17.500px] w-[102px] items-center justify-between border border-[#777] bg-white px-[2px] text-[9.500px] tracking-[-0.4px] text-[#222]">
        61%<svg viewBox="0 0 8 5" className="mr-[2px] h-[4px] w-[7px]"><path d="M1 1l3 3 3-3" fill="none" stroke="#444" /></svg>
      </div>
      <Ico className="ml-[4px] h-[18px] w-[18px]"><path d="M2 8V2h6M12 2h6v6M18 12v6h-6M8 18H2v-6" strokeWidth="3.400" stroke="#222" /><path d="M8 8l4 4M12 8l-4 4" strokeWidth="2" /></Ico>
      <span className="mx-[4.500px]"><Caret /></span>
      <Ico className="h-[17px] w-[18px]"><path d="M1 11q9-12 18 0-9 8-18 0z" fill="#fff" strokeWidth="1.600" /><circle cx="10" cy="10" r="4.500" fill="#3aa4e0" stroke="#136" /><circle cx="10" cy="10" r="1.800" fill="#000" /></Ico>
      <span className="mx-[4px]"><Caret /></span>
      <Ico className="h-[17px] w-[17px]"><path d="M1 9q5-4 3 2t0 7q6 0 8-5" stroke="#911" strokeWidth="1.800" /><path d="M7 14L16 2q4 1 3 5l-8 9z" fill="#e83828" stroke="#811" /></Ico>
      <span className="flex-1" />
      <Ico className="h-[17px] w-[17px]"><ellipse cx="10" cy="15" rx="8" ry="4" fill="#333" /><path d="M4 11V6l6-4 5 3v6q-5 4-11 0z" fill="#ddd" stroke="#888" /></Ico>
      <Ico className="ml-[5px] h-[17px] w-[17px]">{cylinder("#f4f4f4", "#555")}</Ico>
      <span className="ml-[3px] mr-[6px] flex h-[21px] w-[21px] items-center justify-center border border-[#2a84d8] bg-[#e6f0fa]"><Ico className="h-[18px] w-[18px]">{cylinder("url(#cyl)", "#700")}</Ico></span>
      <span className="mr-[7px] h-[17px] w-px bg-[#bbb]" />
      <Ico className="mr-[4px] h-[17px] w-[17px]">{cylinder("#20a0a0", "#134")}</Ico>
      <Ico className="mr-[4px] h-[17px] w-[17px]">{cylinder("#70b828", "#253")}</Ico>
      <Ico className="h-[17px] w-[17px]"><circle cx="10" cy="10" r="8.500" fill="#eee" /><path d="M10 1.500a8.500 8.500 0 010 17z" fill="#f49020" /><path d="M10 1.500v17" /></Ico>
      <span className="mx-[3.500px] h-[17px] w-px bg-[#bbb]" />
      <Ico className="h-[17px] w-[15px]"><circle cx="10" cy="10" r="8.500" fill="url(#ballSky)" stroke="#247" /></Ico>
      <span className="ml-[4px] mr-[2px]"><Caret /></span>
    </div>
  );
}

/* ---------- Grasshopper canvas ---------- */

const OX = 7.6;
const OY = 177.6;
const at = (x: number, y: number, w: number, h: number): React.CSSProperties => ({ left: x - OX, top: y - OY, width: w, height: h });

const groups: [number, number, number, number, string, number][] = [
  [347.500, 170, 300, 175.500, "Select Points and connect", 6.5],
  [362, 346.500, 174, 79, "Draw outline", 4.5],
  [16.300, 320, 289.200, 88.500, "Get the last item to draw person on", 5],
  [-6, 412.500, 169.500, 69, "Get the perp frames to orient", 5],
  [189, 418, 208, 66, "Connect with nurbs curve", 5.5],
  [214.500, 559.500, 382, 174, "Select Points and connect", 5],
  [616.500, 583, 40, 75.500, "Create", 5.5],
];

type W = [number, number, number, number, number?, number?];
/* x1, y1, x2, y2, double line, handle length */
const wires: W[] = [
  [382, 300, 494, 214, 1], [382, 300, 494, 258, 1], [382, 300, 531, 299.500, 1], [382, 300, 465, 313, 1],
  [302, 369, 357, 301, 1], [302, 369, 373, 372.500, 1], [259, 398, 373, 381.500],
  [602, 218, 690, 262], [605, 267.500, 660, 267], [606, 314, 665, 270],
  [446, 324, 465, 322], [452, 336, 465, 331], [406, 377.500, 412, 377], [456, 387, 510, 388], [505, 397, 510, 397], [506, 416, 510, 406],
  [525, 215, 529, 213], [566, 213, 570, 214], [525, 262, 529, 262], [566, 262, 573, 262], [526, 309, 531, 309], [569, 308, 574, 309],
  [100, 377, 129.500, 379.500, 1], [100, 391, 129.500, 389], [110.500, 446.500, 129.500, 398, 0, 26], [161, 381, 174, 373, 1], [205, 373.500, 223, 357.500],
  [259, 362, 270, 369], [110.500, 446.500, 223, 393.500], [161, 381, 200, 447, 1, 32], [161, 381, 225.500, 688.500, 1, 228],
  [364.500, 456, 371, 456], [364, 473, 371, 464], [29, 441, 73.500, 442], [29, 441, 35.500, 452], [0, 474, 35.500, 461.500], [66, 470, 73.500, 451], [66, 452, 70, 452],
  [249, 688.500, 361, 602, 1], [249, 688.500, 361, 645.500, 1], [249, 688.500, 398, 687, 1], [249, 688.500, 332, 701, 1],
  [312.500, 713, 332, 710.500], [319.500, 725, 332, 719], [468.500, 606.500, 628, 613.500], [468.500, 606.500, 571, 655], [471.500, 655, 627, 630.500],
  [471.500, 655, 571, 655.500], [473, 702, 571, 655.500], [473, 702, 626, 648], [392, 602, 397, 601], [433, 601, 438, 602], [393, 650, 397, 650], [433, 650, 441, 651],
  [393, 698, 398, 697], [435, 697, 442, 698], [566, 666, 571, 664], [567, 684, 571, 673],
];

function wirePath([x1, y1, x2, y2, , k]: W) {
  const h = k ?? Math.abs(x2 - x1) * 0.45;
  return `M${x1} ${y1}C${x1 + h} ${y1} ${x2 - h} ${y2} ${x2} ${y2}`;
}

const g = {
  hex: <path d="M10 1l8 4.500v9L10 19l-8-4.500v-9z" fill="#444" />,
  item: <><path d="M8 2h5v16H8z" fill="#7c3" stroke="#484" /><path d="M2 7v7M2 7l5 7V7" strokeWidth="2" /><path d="M9 10h9" stroke="#d22" strokeWidth="3.500" /></>,
  poly: <path d="M3 5l9-2-1 6 7-1M12 3l6 3-6 5-6 5" strokeWidth="1.800" />,
  mesh: <path d="M3 6l8-4 7 5v8l-8 4-7-5z" fill="#6c3" stroke="#262" />,
  cs: <path d="M10 4Q3 1 3 8t6 5M11 9v9M15 8v9M8 12h10M8 15h10" stroke="#c22" strokeWidth="2.400" />,
  flame: <path d="M3 17V8q5-8 7 0v9M11 17V7l5-4v14z" fill="#f90" stroke="#520" />,
  tree: <><path d="M4 4l12 12M16 4L4 16M10 3v14" stroke="#262" strokeWidth="2" /><circle cx="10" cy="10" r="4" fill="#5c2" /></>,
  list: <><path d="M3 3h5v5H3zM3 12h5v5H3z" fill="#c64" stroke="#733" /><path d="M12 2v16M12 5h5M12 15h5" stroke="#383" strokeWidth="2" /></>,
  orient: <><path d="M2 7V2h5M13 2h5v5M18 13v5h-5M7 18H2v-5" stroke="#c31" strokeWidth="2.600" /><path d="M5 12l6-6 4 8z" fill="#aaa" /></>,
  frame: <path d="M2 4h7v5H2zM12 6h6v8h-6zM4 15q6 2 8-4" fill="#f94" stroke="#a31" />,
  curve: <path d="M3 17q8 0 6-7t8-7" stroke="#a22" strokeWidth="2.200" />,
  net: <><path d="M2 10h16v7H2z" fill="#ddd" /><path d="M5 9l8-7 3 3v5" fill="#c66" /></>,
  nurbs: <path d="M2 3q14 1 14 7T2 17M18 3q-8 1-8 7t8 7" stroke="#300" strokeWidth="1.800" />,
  lines: <><path d="M0 0h11v3H0z" fill="#22d" stroke="none" /><path d="M3 4h16v15H3z" fill="#333" stroke="none" /><path d="M7.500 5v13M11.500 5v13M15.500 5v13" stroke="#aaa" strokeWidth="1.200" /></>,
  dots: <g stroke="none"><circle cx="6" cy="6" r="5" fill="#f4c" /><circle cx="14" cy="6" r="5" fill="#c03" /><circle cx="6" cy="14" r="5" fill="#c0106c" /><circle cx="14" cy="14" r="5" fill="#f14" /></g>,
  plane: <><circle cx="10" cy="10" r="9" fill="#222" /><path d="M5 14l10-9" stroke="#ddd" strokeWidth="3" /></>,
};

type NodeSpec = { r: [number, number, number, number]; i?: string[]; o?: string[]; icon: React.ReactNode; kind?: "red" | "light" };
const nodes: NodeSpec[] = [
  { r: [357.500, 294, 24.500, 12.500], icon: g.hex, i: [""], o: [""] },
  { r: [225.500, 683, 23.500, 11.500], icon: g.hex, i: [""], o: [""] },
  ...([[529, 198, 37, 30], [529, 247, 37.500, 30], [531.500, 293.500, 37.500, 30], [396.500, 586.500, 37, 29.500], [396.500, 635, 37, 29.500], [398.500, 681.500, 37, 30]] as [number, number, number, number][]).map((r) => ({ r, icon: g.item, i: ["\u00a0\u00a0\u00a0\u00a0\u00a0L", "\u00a0\u00a0\u00a0\u00a0\u00a0i", "▣ W"], o: ["i"] })),
  ...([[570, 208, 32, 20.500], [573.500, 257, 31.500, 21], [574, 304, 32, 21], [437.500, 596.500, 31, 20.500], [440.500, 645.500, 31, 20.500], [442, 692.500, 31, 20.500]] as [number, number, number, number][]).map((r) => ({ r, icon: g.poly, i: ["V", "C"], o: ["Pl"] })),
  { r: [373, 367, 33, 21], icon: g.mesh, i: ["P", "Pl"], o: ["M"] },
  { r: [412, 371, 44, 21], icon: g.cs, i: ["M", "y"], o: ["out", "A ⊞"] },
  { r: [129.500, 373.500, 31.500, 30], icon: g.flame, i: ["G", "A", "B"], o: ["G", "X"] },
  { r: [174.500, 367.500, 31, 12], icon: g.tree, i: ["O"], o: ["G"] },
  { r: [223, 347.500, 36, 20], icon: g.list, i: ["⊞ L"], o: ["F", "L"] },
  { r: [223, 383.500, 36, 20], icon: g.list, i: ["⊞ L"], o: ["F", "L"] },
  { r: [270.500, 362.500, 31, 13], icon: g.orient, i: ["G"], o: ["O"] },
  { r: [0, 436, 29, 10.500], icon: g.plane, i: [""], o: [""] },
  { r: [73.500, 436.500, 37, 20.500], icon: g.frame, i: ["C", "t"], o: ["F ⊞"] },
  { r: [35.500, 447.500, 30.500, 29.500], icon: g.curve, i: ["C", "N", "K"], o: ["P", "T", "t"] },
  { r: [200, 441, 32, 13], icon: g.net, i: ["D"], o: ["D"] },
  { r: [241.500, 441, 31.500, 30], icon: g.nurbs, i: ["V", "D", "P"], o: ["C", "L", "D"], kind: "red" },
  { r: [371, 441.500, 23, 38.500], icon: g.lines, i: ["G", "S", "T", "A"], kind: "light" },
  { r: [510.500, 382.500, 22.500, 38.500], icon: g.lines, i: ["G", "S", "T", "A"], kind: "light" },
  { r: [571, 650.500, 22.500, 38.500], icon: g.lines, i: ["G", "S", "T", "A"], kind: "light" },
  { r: [465, 307.500, 21.500, 29.500], icon: g.dots, i: ["P", "C", "S"], kind: "light" },
  { r: [332, 695.500, 22.500, 29.500], icon: g.dots, i: ["P", "C", "S"], kind: "light" },
  { r: [628, 608, 30, 11.500], icon: g.hex, i: ["⊞"], o: [""] },
  { r: [627.500, 625.500, 30, 11.500], icon: g.hex, i: ["⊞"], o: [""] },
  { r: [626.500, 642.500, 30, 11.500], icon: g.hex, i: ["⊟"], o: [""] },
];

function Ports({ names, side }: { names: string[]; side: "l" | "r" }) {
  return (
    <div className="flex h-full flex-col justify-around">
      {names.map((n, i) => (
        <div key={i} className={"flex items-center gap-[2px] " + (side === "l" ? "-ml-[2.500px]" : "-mr-[2.500px] flex-row-reverse")}>
          <span className="h-[4px] w-[4px] shrink-0 rounded-full border border-[#222] bg-white" />
          <span className="whitespace-nowrap leading-none">{n}</span>
        </div>
      ))}
    </div>
  );
}

function Node({ n }: { n: NodeSpec }) {
  const tone =
    n.kind === "red" ? "bg-[#d81414] border-[#600] text-[#500] rounded-[2px]"
      : n.kind === "light" ? "bg-gradient-to-b from-[#e8e8e8] to-[#cfcfcf] border-[#333] text-[#333] rounded-l-[2px] border-r-[1.500px] [border-right-style:dotted]"
        : "bg-gradient-to-b from-[#aeaebc] to-[#8e8e9e] border-[#2c2c34] text-[#222] rounded-[2.500px]";
  return (
    <div className={"absolute flex items-center justify-between border " + tone} style={at(...n.r)}>
      <Ports names={n.i ?? []} side="l" />
      <Ico className={n.kind === "light" ? "h-[11px] w-[11px]" : "h-[10px] w-[10px]"}>{n.icon}</Ico>
      {n.o ? <Ports names={n.o} side="r" /> : <span />}
    </div>
  );
}

const panels: [number, number, string[]][] = [
  [494, 191.500, ["19", "16", "17", "15", "21"]], [494.500, 240, ["20", "19", "18", "22", "26"]], [494.500, 287.500, ["8", "6", "5", "4", "7"]],
  [361.500, 579.500, ["19", "12", "17", "16", "22"]], [362.500, 628.500, ["20", "19", "14", "13", "24"]], [362.500, 676.500, ["8", "6", "5", "4", "8"]],
];

function Port({ right = false }: { right?: boolean }) {
  return <span className={"absolute top-1/2 h-[4px] w-[4px] -translate-y-1/2 rounded-full border border-[#222] bg-white " + (right ? "-right-[2.500px]" : "-left-[2.500px]")} />;
}

function YellowPanel({ p: [x, y, rows] }: { p: [number, number, string[]] }) {
  return (
    <div className="absolute rounded-[2px] border border-[#6a6420] bg-[#fffb5c] text-[4.500px] leading-none text-[#c4bc38]" style={at(x, y, 31, 45.500)}>
      <div className="flex h-full">
        <div className="flex flex-1 flex-col">
          <div className="h-[6px] border-b border-[#d8d040] bg-[#eee650] pr-px text-right">{"{0}"}</div>
          {rows.map((r, i) => (
            <div key={i} className={"flex flex-1 items-center pl-[2px] " + (i % 2 ? "bg-[#fffb5c]" : "bg-[#f8f050]")}>
              <span className="w-[4px] border-r border-[#e0d840]">{i}</span>{r}
            </div>
          ))}
        </div>
        <div className="h-[30px] w-[3px] rounded-b bg-[#a8a030]" />
      </div>
      <Port /><Port right />
    </div>
  );
}

type Ctl = { r: [number, number, number, number]; label: string; lw: string; color?: string; v?: string };
const controls: Ctl[] = [
  { r: [404.500, 319.500, 42, 9], label: "Swatch", lw: "w-[22px]", color: "bg-[#75c5ff]" },
  { r: [463.500, 393, 42, 9], label: "Swatch", lw: "w-[22px]", color: "bg-black" },
  { r: [323.500, 452, 41.500, 9], label: "Swatch", lw: "w-[22px]", color: "bg-[#c8c8c8]" },
  { r: [271.500, 708.500, 41.500, 9], label: "Swatch", lw: "w-[22px]", color: "bg-[#75c5ff]" },
  { r: [524.500, 662, 42, 9.500], label: "Swatch", lw: "w-[22px]", color: "bg-black" },
  { r: [378, 331.500, 74.500, 9.500], label: "Size", lw: "w-[15px]", v: "15" },
  { r: [245.500, 720.500, 74.500, 9.500], label: "Size", lw: "w-[15px]", v: "15" },
  { r: [422.500, 411, 84, 10], label: "Thickness", lw: "w-[28px]", v: "1" },
  { r: [281.500, 468.500, 83, 9.500], label: "Thickness", lw: "w-[28px]", v: "2" },
  { r: [483.500, 679.500, 84, 9.500], label: "Thickness", lw: "w-[28px]", v: "1" },
  { r: [616.500, 291, 84, 10], label: "Thickness", lw: "w-[28px]", v: "1" },
];

function Control({ c }: { c: Ctl }) {
  return (
    <div className="absolute flex overflow-visible rounded-[2px] border border-[#222] bg-[#dcdcdc] text-[5.500px] leading-none text-[#111]" style={at(...c.r)}>
      <span className={"flex shrink-0 items-center justify-center border-r border-[#222] bg-[#9a9aa8] " + c.lw}>{c.label}</span>
      {c.color ? <span className={"flex-1 " + c.color} /> : (
        <span className="flex flex-1 items-center gap-px pl-[3px]">
          <span className="h-px w-[5px] bg-[#999]" />
          <span className="h-[3.500px] w-[3.500px] rotate-45 border border-[#222]" />
          {c.v}
          <span className="mx-[3px] h-px flex-1 bg-[#bbb]" />
        </span>
      )}
      <Port right />
    </div>
  );
}

const tags: [number, number, number, string, boolean][] = [
  [119, 309, 84, "Get the last item to draw person on", false], [43, 401.500, 70, "Get the perp frames to orient", true],
  [262.500, 407, 61.500, "Connect with nurbs curve", false], [374.500, 548, 62, "Select Points and connect", false], [432, 336, 34, "outline", false],
];

const capsules: [number, number, number, string][] = [[34.500, 372.500, 66, "Multiple Frame Points"], [44.500, 386.500, 56, "Orientation Plane"]];

function Canvas() {
  return (
    <div className="relative h-[858px] shrink-0 overflow-hidden bg-[#d4d0c8] font-['Liberation_Sans',sans-serif]">
      <svg viewBox="7 177 638 858" className="absolute left-0 top-0 h-[858px] w-[638px]" stroke="#bcb9b1" strokeWidth="1">
        {Array.from({ length: 10 }, (_, i) => <path key={i} d={`M${37.500 + i * 68.900} 177v858`} />)}
        {Array.from({ length: 38 }, (_, i) => <path key={i} d={`M7 ${193.500 + i * 23}h638`} />)}
      </svg>
      {groups.map(([x, y, w, h, t, pt], i) => (
        <div key={i} className="absolute border border-[#8ea4dc] bg-[#9bb4ec]/80 pl-[5.500px] text-[12px] leading-[13px] tracking-[0.09px] text-black [-webkit-text-stroke:0.25px_black]" style={{ ...at(x, y, w, h), paddingTop: pt }}>
          <span className="whitespace-nowrap">{t}</span>
        </div>
      ))}
      {tags.map(([x, y, w, t, blue], i) => (
        <div key={i} className={"absolute flex items-center justify-center whitespace-nowrap border text-[5.200px] leading-none " + (blue ? "border-[#6078c0] bg-[#c0ccf0] text-[#4058a8]" : "border-[#333] bg-[#fafafa] text-[#222]")} style={at(x, y, w, 8.500)}>
          {t}
          <svg viewBox="0 0 6 4" className="absolute -bottom-[3px] left-1/2 h-[3px] w-[5px] -translate-x-1/2"><path d="M0 0l3 3 3-3" fill="#fff" stroke="#333" /></svg>
        </div>
      ))}
      <svg viewBox="7 177 638 858" className="absolute left-0 top-0 h-[858px] w-[638px]" fill="none">
        {wires.map((w, i) => (
          <g key={i}>
            <path d={wirePath(w)} stroke="#3c4254" strokeWidth={w[4] ? 2.400 : 1.200} opacity=".85" />
            {w[4] ? <path d={wirePath(w)} stroke="#8c98b8" strokeWidth=".9" /> : null}
          </g>
        ))}
        <path d="M233 446.500h8M274 446.500h97" stroke="#3c4254" strokeWidth="2.400" strokeDasharray="6 2" opacity=".85" />
        <path d="M274 446.500h97" stroke="#9aa8cc" strokeWidth=".8" />
      </svg>
      <div className="text-[5.500px]">
        {nodes.map((n, i) => <Node key={i} n={n} />)}
      </div>
      {panels.map((p, i) => <YellowPanel key={i} p={p} />)}
      {controls.map((c, i) => <Control key={i} c={c} />)}
      {capsules.map(([x, y, w, t]) => (
        <div key={t} className="absolute flex items-center justify-between whitespace-nowrap rounded-[2px] border border-[#1c2c78] bg-gradient-to-b from-[#7c94ff] to-[#5470f0] px-[3px] text-[5.500px] leading-none text-[#0c1440]" style={at(x, y, w, 10)}>
          <span className="text-[4.500px]">→</span><span className="pr-px">{t}</span><Port /><Port right />
        </div>
      ))}
      <div className="absolute flex items-center justify-center border border-[#333] bg-[#ddd] text-[5px] leading-none" style={at(35.500, 477, 31, 6.500)}>9ms</div>

      <div className="absolute bottom-0 left-0 flex h-[21px] w-[111px] items-center gap-[3px] border border-b-0 border-l-0 border-[#222] bg-gradient-to-b from-[#e0e0e0] to-[#8c8c8c] pl-[2px]">
        <Ico className="h-[18px] w-[18px]"><rect x="1" y="1" width="18" height="18" fill="#888" stroke="#333" /><path d="M10 3v9M7 9l3 3 3-3M3 14h14M4 14v3M7 14v3M10 14v3M13 14v3M16 14v3" stroke="#000" strokeWidth="1.600" /></Ico>
        <span className="mx-[2px] flex h-[13px] w-[14px] items-center justify-center rounded-[2px] border border-[#666] bg-[#eee] font-['Liberation_Serif',serif] text-[11px] font-bold italic leading-none">-x</span>
        <span className="w-[18px] text-center font-['Liberation_Serif',serif] text-[14px] font-bold italic leading-none">m<sup className="text-[7px]">2</sup></span>
        <span className="mx-[2px] flex h-[13px] w-[14px] items-center justify-center rounded-[2px] border border-[#666] bg-[#eee] text-[14px] font-bold leading-none">+</span>
        <Ico className="h-[17px] w-[17px]"><path d="M10 19v-8L4 4M10 11l6-7" stroke="#848" strokeWidth="1.500" /><g fill="#ddd" stroke="#777" strokeWidth="1"><circle cx="4" cy="4" r="2" /><circle cx="16" cy="4" r="2" /><circle cx="10" cy="11" r="1.500" /><circle cx="10" cy="18" r="1.500" /></g></Ico>
      </div>
      <svg viewBox="0 0 40 36" className="absolute h-[36px] w-[40px]" style={{ left: 592, top: 818 }}>
        <circle cx="22.500" cy="18" r="15" fill="url(#dial)" stroke="#555" />
        <path d="M7 15Q12 0 28 2" fill="none" stroke="#000" strokeWidth="2.600" />
        <path d="M1 9l6-1 1 7z" fill="#000" />
        <path d="M26 6l3-3v5zM9 12l5-1-3 5zM33 22l4-1-2 5zM16 29l3-2v5z" fill="#fff" />
      </svg>
    </div>
  );
}

function GrasshopperWindow() {
  return (
    <div className={"absolute left-[6px] top-[27px] flex h-[1021px] w-[639px] flex-col overflow-hidden border-l border-r border-t border-[#999] border-r-[#ddd] bg-[#f0f0f0] shadow-[2px_0_8px_rgba(0,0,0,0.35)] " + UI}>
      <div className="flex h-[22px] shrink-0 items-center bg-white pl-[5px] text-[11.500px] tracking-[-0.35px] text-[#999]">
        <span className="flex-1 whitespace-nowrap">Grasshopper - 2021-07-07_OpenPoseToGH_2_DS*</span>
        <WinButtons className="mb-[1px] mr-[-2px]" />
      </div>
      <div className="flex h-[20px] shrink-0 items-center bg-gradient-to-r from-[#efefef] to-[#fafafa] pl-[9px] pr-[6px] pt-[2px] text-[9.500px] tracking-[-0.35px] text-[#111]">
        <Slots items={ghMenu} className="flex-1" />
        <span className="whitespace-nowrap tracking-[-0.45px]">2021-07-07_OpenPoseToGH_2_DS*</span>
      </div>
      <div className="flex h-[17px] shrink-0 items-center text-[9px] tracking-[-0.3px] text-[#888]">
        <span className="mr-[5px] flex h-full w-[28px] items-center justify-center rounded-t-[5px] border border-b-0 border-[#999] bg-white text-[#222]">Prm</span>
        <Slots items={ghTabs} className="pt-[3px]" />
      </div>
      <Ribbon />
      <CanvasToolbar />
      <Canvas />
      <div className="flex flex-1 justify-end border-t border-[#fff] pr-[22px] pt-[2px] text-[9.500px] leading-[14px] tracking-[-0.3px] text-[#888]">1.0.0007</div>
    </div>
  );
}

export default function App() {
  return (
    <div className="relative h-[1048px] w-[1920px] overflow-hidden bg-black">
      <Defs />
      <span className="absolute left-[2px] top-[118px] text-[9px] text-[#6080a0]">2</span>
      <RhinoWindow />
      <GrasshopperWindow />
    </div>
  );
}
